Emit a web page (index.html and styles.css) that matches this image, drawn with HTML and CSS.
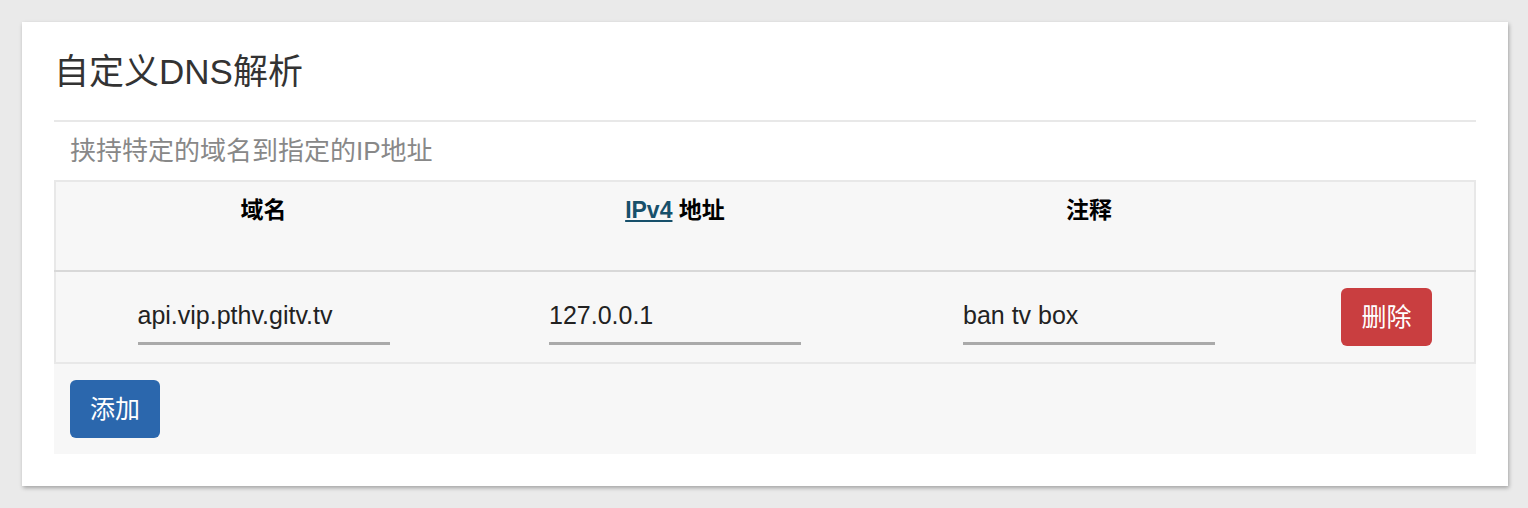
FILE: index.html
```html
<!DOCTYPE html>
<html lang="zh-CN">
<head>
    <meta charset="UTF-8">
    <meta name="viewport" content="width=device-width, initial-scale=1.0">
    <title>自定义DNS解析</title>
    <link rel="stylesheet" href="styles.css">
</head>
<body>
    <div class="card">
        <h2 class="card-title">自定义DNS解析</h2>
        <p class="card-desc">挟持特定的域名到指定的IP地址</p>

        <!-- 解析列表 -->
        <table class="dns-table">
            <colgroup>
                <col class="col-domain">
                <col class="col-ip">
                <col class="col-note">
                <col>
            </colgroup>
            <thead>
                <tr>
                    <th>域名</th>
                    <th><a href="#" class="abbr">IPv4</a> 地址</th>
                    <th>注释</th>
                    <th></th>
                </tr>
            </thead>
            <tbody>
                <tr>
                    <td><input type="text" value="api.vip.pthv.gitv.tv"></td>
                    <td><input type="text" value="127.0.0.1"></td>
                    <td><input type="text" value="ban tv box"></td>
                    <td><button class="btn btn-remove">删除</button></td>
                </tr>
            </tbody>
        </table>

        <div class="table-footer">
            <button class="btn btn-add">添加</button>
        </div>
    </div>
</body>
</html>
```

FILE: styles.css
```css
body {
    margin: 0;
    padding: 22px 20px 22px 22px;
    background-color: #eaeaea;
    font-family: "Liberation Sans", "Noto Sans CJK SC", sans-serif;
}
.card {
    background: #fff;
    padding: 30px 32px 32px;
    box-shadow: 1px 2px 4px rgba(0, 0, 0, 0.3);
}
.card-title {
    margin: 0;
    font-size: 35px;
    font-weight: normal;
    line-height: 40px;
    color: #333;
    padding-bottom: 28px;
    border-bottom: 2px solid #e8e8e8;
}
.card-desc {
    margin: 11px 0;
    padding-left: 16px;
    font-size: 26px;
    line-height: 36px;
    color: #888;
}
.dns-table {
    width: 100%;
    table-layout: fixed;
    border-collapse: collapse;
    background: #f7f7f7;
    border: 2px solid #e8e8e8;
}
.col-domain { width: 416px; }
.col-ip { width: 408px; }
.col-note { width: 420px; }
.dns-table th {
    height: 90px;
    padding: 12px 0 0;
    vertical-align: top;
    font-size: 23px;
    line-height: 32px;
    color: #000;
    border-bottom: 2px solid #d8d8d8;
    box-sizing: border-box;
}
.abbr {
    color: #17506b;
}
.dns-table td {
    height: 90px;
    padding: 0;
    text-align: center;
    vertical-align: middle;
}
.dns-table input {
    width: 252px;
    height: 55px;
    box-sizing: border-box;
    padding: 0;
    border: none;
    border-bottom: 3px solid #aaa;
    background: transparent;
    font-family: inherit;
    font-size: 25px;
    color: #222;
    outline: none;
}
.btn {
    padding: 11px 20px;
    border: none;
    border-radius: 6px;
    font-family: inherit;
    font-size: 25px;
    line-height: 36px;
    color: #fff;
    cursor: pointer;
}
.btn-remove {
    background: #c93e40;
}
.btn-add {
    background: #2b67ad;
}
.table-footer {
    background: #f7f7f7;
    padding: 16px;
}
```
